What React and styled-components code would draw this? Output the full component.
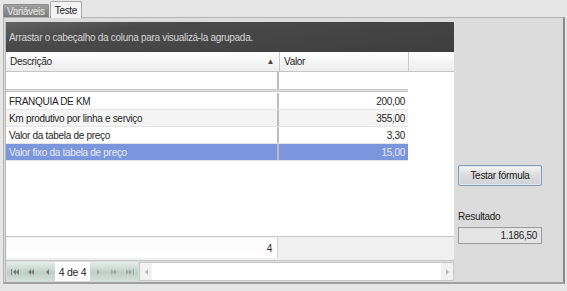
import React from 'react'
import styled, { createGlobalStyle } from 'styled-components'

const rows = [
  { name: 'FRANQUIA DE KM', value: '200,00' },
  { name: 'Km produtivo por linha e serviço', value: '355,00' },
  { name: 'Valor da tabela de preço', value: '3,30' },
  { name: 'Valor fixo da tabela de preço', value: '15,00', selected: true },
]

const Tri = ({ dir = 'left', bar, double, color = '#7a7a7a' }) => {
  const one = (x) =>
    dir === 'left'
      ? `M${x + 3} 0 L${x} 3 L${x + 3} 6 Z`
      : `M${x} 0 L${x + 3} 3 L${x} 6 Z`
  let d = ''
  let w = 3
  if (dir === 'left') {
    let x = bar ? 2 : 0
    d += one(x)
    if (double) d += one(x + 3)
    w = x + (double ? 6 : 3)
  } else {
    d += one(0)
    if (double) d += one(3)
    w = double ? 6 : 3
    if (bar) w += 2
  }
  return (
    <svg width={w} height="6" viewBox={`0 0 ${w} 6`}>
      <path d={d} fill={color} />
      {bar && dir === 'left' && <rect x="0" y="0" width="1" height="6" fill={color} />}
      {bar && dir === 'right' && <rect x={w - 1} y="0" width="1" height="6" fill={color} />}
    </svg>
  )
}

export default function App() {
  return (
    <>
      <GlobalStyle />
      <Screen>
        <TabStrip>
          <Tab>Variáveis</Tab>
          <Tab active>Teste</Tab>
        </TabStrip>
        <Panel>
          <Grid>
            <GroupPanel>Arrastar o cabeçalho da coluna para visualizá-la agrupada.</GroupPanel>
            <HeaderRow>
              <HeaderCell width={274}>
                Descrição
                <SortArrow>▲</SortArrow>
              </HeaderCell>
              <HeaderCell width={129}>Valor</HeaderCell>
              <HeaderCell width={44} last />
            </HeaderRow>
            <Body>
              <Row>
                <Cell width={273} />
                <Cell width={129} last />
              </Row>
              <FilterLine />
              {rows.map((r, i) => (
                <Row key={r.name} selected={r.selected} alt={i % 2 === 1}>
                  <Cell width={273}>{r.name}</Cell>
                  <Cell width={129} last align="right">{r.value}</Cell>
                </Row>
              ))}
            </Body>
            <SummaryRow>
              <SummaryCell>4</SummaryCell>
            </SummaryRow>
            <Navigator>
              <NavButtons>
                <NavBtn><Tri dir="left" bar double /></NavBtn>
                <NavBtn><Tri dir="left" double /></NavBtn>
                <NavBtn><Tri dir="left" /></NavBtn>
              </NavButtons>
              <Counter>4 de 4</Counter>
              <NavButtons>
                <NavBtn><Tri dir="right" color="#a4aaa8" /></NavBtn>
                <NavBtn><Tri dir="right" double color="#a4aaa8" /></NavBtn>
                <NavBtn><Tri dir="right" bar double color="#a4aaa8" /></NavBtn>
              </NavButtons>
              <ScrollBar>
                <ScrollArrow><Tri dir="left" color="#b8b8b8" /></ScrollArrow>
                <ScrollArrow><Tri dir="right" color="#b8b8b8" /></ScrollArrow>
              </ScrollBar>
            </Navigator>
          </Grid>
          <Side>
            <TestButton>Testar fórmula</TestButton>
            <ResultLabel>Resultado</ResultLabel>
            <ResultBox>1.186,50</ResultBox>
          </Side>
        </Panel>
      </Screen>
    </>
  )
}

const GlobalStyle = createGlobalStyle`
  html, body {
    margin: 0;
    padding: 0;
    background: #e6e6e6;
  }
  body {
    font-family: 'Liberation Sans', Arial, sans-serif;
    font-size: 10px;
    letter-spacing: -0.3px;
    color: #1e1e1e;
  }
`

const Screen = styled.div`
  width: 567px;
  height: 291px;
  background: #e6e6e6;
  display: flex;
  flex-direction: column;
  overflow: hidden;
`

const TabStrip = styled.div`
  height: 17px;
  display: flex;
  align-items: flex-end;
  padding-left: 3px;
  gap: 1px;
`

const Tab = styled.div`
  height: ${p => (p.active ? '17px' : '13px')};
  padding: 0 ${p => (p.active ? '4px' : '3px')};
  display: flex;
  align-items: center;
  box-sizing: border-box;
  border: 1px solid ${p => (p.active ? '#a8a8a8' : '#8c8c8c')};
  border-bottom: none;
  border-radius: 2px 2px 0 0;
  background: ${p => (p.active ? '#f4f4f4' : 'linear-gradient(#a0a0a0, #7a7a7a)')};
  color: ${p => (p.active ? '#1e1e1e' : '#ececec')};
  margin-bottom: ${p => (p.active ? '-1px' : '0')};
  position: relative;
  z-index: ${p => (p.active ? 1 : 0)};
`

const Panel = styled.div`
  margin: 0 2px 0 3px;
  height: 267px;
  box-sizing: border-box;
  border: 1px solid #b4b4b4;
  border-right: 2px solid #8a8a8a;
  border-bottom: 2px solid #a0a0a0;
  background: #dcdcdc;
  display: flex;
  padding: 4px 0 0 1px;
`

const Grid = styled.div`
  width: 448px;
  height: 260px;
  display: flex;
  flex-direction: column;
  border-left: 1px solid #b8b8b8;
`

const GroupPanel = styled.div`
  height: 30px;
  display: flex;
  align-items: center;
  padding-left: 3px;
  background: linear-gradient(172deg, #626262 0%, #4a4a4a 25%, #3e3e3e 100%);
  color: #d6d6d6;
  border-top-right-radius: 1px;
`

const HeaderRow = styled.div`
  height: 20px;
  display: flex;
  box-sizing: border-box;
  background: linear-gradient(#ffffff, #ededed);
  border-bottom: 1px solid #c4c4c4;
`

const HeaderCell = styled.div`
  width: ${p => p.width}px;
  box-sizing: border-box;
  display: flex;
  align-items: center;
  padding-left: 4px;
  padding-right: 5px;
  border-right: ${p => (p.last ? 'none' : '1px solid #c8c8c8')};
`

const SortArrow = styled.span`
  margin-left: auto;
  font-size: 8px;
  color: #444;
`

const Body = styled.div`
  flex: 1;
  background: #ffffff;
  display: flex;
  flex-direction: column;
`

const FilterLine = styled.div`
  width: 402px;
  height: 3px;
  box-sizing: border-box;
  background: #dedede;
  border-top: 1px solid #c8c8c8;
  border-bottom: 1px solid #c8c8c8;
  margin-bottom: 1px;
`

const Row = styled.div`
  width: 402px;
  height: 17px;
  display: flex;
  box-sizing: border-box;
  border-bottom: 1px solid #e4e4e4;
  background: ${p => (p.selected ? '#7b96dc' : p.alt ? '#f4f4f4' : '#ffffff')};
  color: ${p => (p.selected ? '#e6ecfa' : '#1e1e1e')};
  &:first-child {
    border-bottom: none;
  }
`

const Cell = styled.div`
  width: ${p => p.width}px;
  box-sizing: border-box;
  display: flex;
  align-items: center;
  justify-content: ${p => (p.align === 'right' ? 'flex-end' : 'flex-start')};
  padding: 0 ${p => (p.align === 'right' ? '3px' : '0')} 0 ${p => (p.align === 'right' ? '0' : '3px')};
  border-right: ${p => (p.last ? 'none' : '2px solid #bdbdbd')};
`

const SummaryRow = styled.div`
  height: 25px;
  box-sizing: border-box;
  display: flex;
  align-items: flex-end;
  padding: 0 0 2px 1px;
  background: #f0f0f0;
  border-top: 1px solid #c6c6c6;
  border-bottom: 1px solid #c6c6c6;
`

const SummaryCell = styled.div`
  width: 271px;
  height: 20px;
  box-sizing: border-box;
  display: flex;
  align-items: center;
  justify-content: flex-end;
  padding-right: 5px;
  background: linear-gradient(#fbfbfb, #ffffff);
  border-right: 1px solid #d4d4d4;
  color: #2a2a3a;
`

const Navigator = styled.div`
  height: 21px;
  display: flex;
  align-items: stretch;
  padding: 1px 0 1px 1px;
  box-sizing: border-box;
`

const NavButtons = styled.div`
  display: flex;
  background: linear-gradient(#e8eeeb, #bcd0c8 55%, #d4e0da);
`

const NavBtn = styled.div`
  width: 16px;
  display: flex;
  align-items: center;
  justify-content: center;
`

const Counter = styled.div`
  width: 35px;
  display: flex;
  align-items: center;
  justify-content: center;
  background: #ffffff;
  color: #1e1e1e;
  font-size: 10.5px;
`

const ScrollBar = styled.div`
  flex: 1;
  margin-left: 1px;
  display: flex;
  justify-content: space-between;
  box-sizing: border-box;
  background: #ffffff;
  border: 1px solid #c8c8c8;
`

const ScrollArrow = styled.div`
  width: 12px;
  display: flex;
  align-items: center;
  justify-content: center;
  background: #f2f2f2;
`

const Side = styled.div`
  flex: 1;
  display: flex;
  flex-direction: column;
  padding: 143px 0 0 4px;
`

const TestButton = styled.div`
  width: 84px;
  height: 21px;
  box-sizing: border-box;
  display: flex;
  align-items: center;
  justify-content: center;
  border: 1px solid #8a9ab0;
  border-radius: 2px;
  background: linear-gradient(#f6f6f6, #dcdcdc 50%, #cfd4da);
  box-shadow: inset 0 0 0 1px #d8e8f6;
  color: #222;
`

const ResultLabel = styled.div`
  margin-top: 23px;
  height: 14px;
  display: flex;
  align-items: center;
  color: #1e1e1e;
`

const ResultBox = styled.div`
  margin-top: 4px;
  width: 84px;
  height: 17px;
  box-sizing: border-box;
  display: flex;
  align-items: center;
  justify-content: flex-end;
  padding-right: 4px;
  border: 1px solid #9a9a9a;
  background: #e4e4e4;
  color: #1e1e1e;
`
